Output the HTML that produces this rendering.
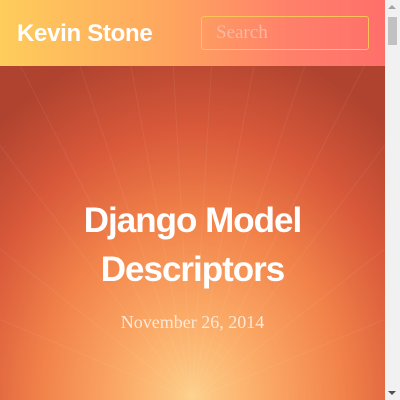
<!DOCTYPE html>
<html><head><style>
html,body{margin:0;padding:0;width:400px;height:400px;overflow:hidden;background:#f1f1f1}
.page{position:absolute;left:0;top:0;width:385px;height:400px;overflow:hidden}
.hdr{position:absolute;left:0;top:0;width:385px;height:66px;background:linear-gradient(90deg,#fecd5b 0%,#fea45f 45%,#ff806a 75%,#ff6f6a 100%)}
.logo{position:absolute;left:17px;top:20px;font:bold 24px "Liberation Sans",sans-serif;color:#fff;letter-spacing:-0.3px}
.search{position:absolute;left:201px;top:16px;width:168px;height:34px;border:1px solid #fcc35a;border-radius:3px;box-sizing:border-box;padding-left:14px;font:19px "Liberation Serif",serif;color:#fdb6a0;line-height:32px}
.hero{position:absolute;left:0;top:66px;width:385px;height:334px;background:radial-gradient(ellipse 300px 360px at 50% 100%,#fdd08a 0%,#fba865 25%,#f2834a 50%,#d9593a 75%,#b0432f 100%)}
.rays{position:absolute;left:0;top:0;width:385px;height:334px;opacity:.06}
h1{position:absolute;left:0;width:385px;top:196px;margin:0;text-align:center;font:bold 35px/49px "Liberation Sans",sans-serif;color:#fff;letter-spacing:-1px}
.date{position:absolute;left:0;width:385px;top:312px;text-align:center;font:18px "Liberation Serif",serif;color:#fde8d6}
.sb{position:absolute;left:385px;top:0;width:15px;height:400px;background:#f1f1f1}
.thumb{position:absolute;left:388px;top:17px;width:9px;height:28px;background:#c1c1c1}
.up{position:absolute;left:388px;top:5px;width:0;height:0;border-left:4px solid transparent;border-right:4px solid transparent;border-bottom:4px solid #a3a3a3}
.dn{position:absolute;left:388px;top:391px;width:0;height:0;border-left:4px solid transparent;border-right:4px solid transparent;border-top:4px solid #505050}
</style></head><body>
<div class="page">
<div class="hero">
<svg class="rays" viewBox="0 0 385 334" width="385" height="334">
<g fill="none" stroke="#fff" stroke-width="1">
<path d="M192 334 L-60 0 M192 334 L0 -40 M192 334 L60 -60 M192 334 L120 -60 M192 334 L170 -60 M192 334 L215 -60 M192 334 L265 -60 M192 334 L325 -60 M192 334 L385 -40 M192 334 L445 0 M192 334 L-80 120 M192 334 L465 120 M192 334 L-80 220 M192 334 L465 220"/>
</g></svg>
</div>
<div class="hdr"><div class="logo">Kevin Stone</div><div class="search">Search</div></div>
<h1>Django Model<br>Descriptors</h1>
<div class="date">November 26, 2014</div>
</div>
<div class="sb"></div><div class="up"></div><div class="thumb"></div><div class="dn"></div>
</body></html>
